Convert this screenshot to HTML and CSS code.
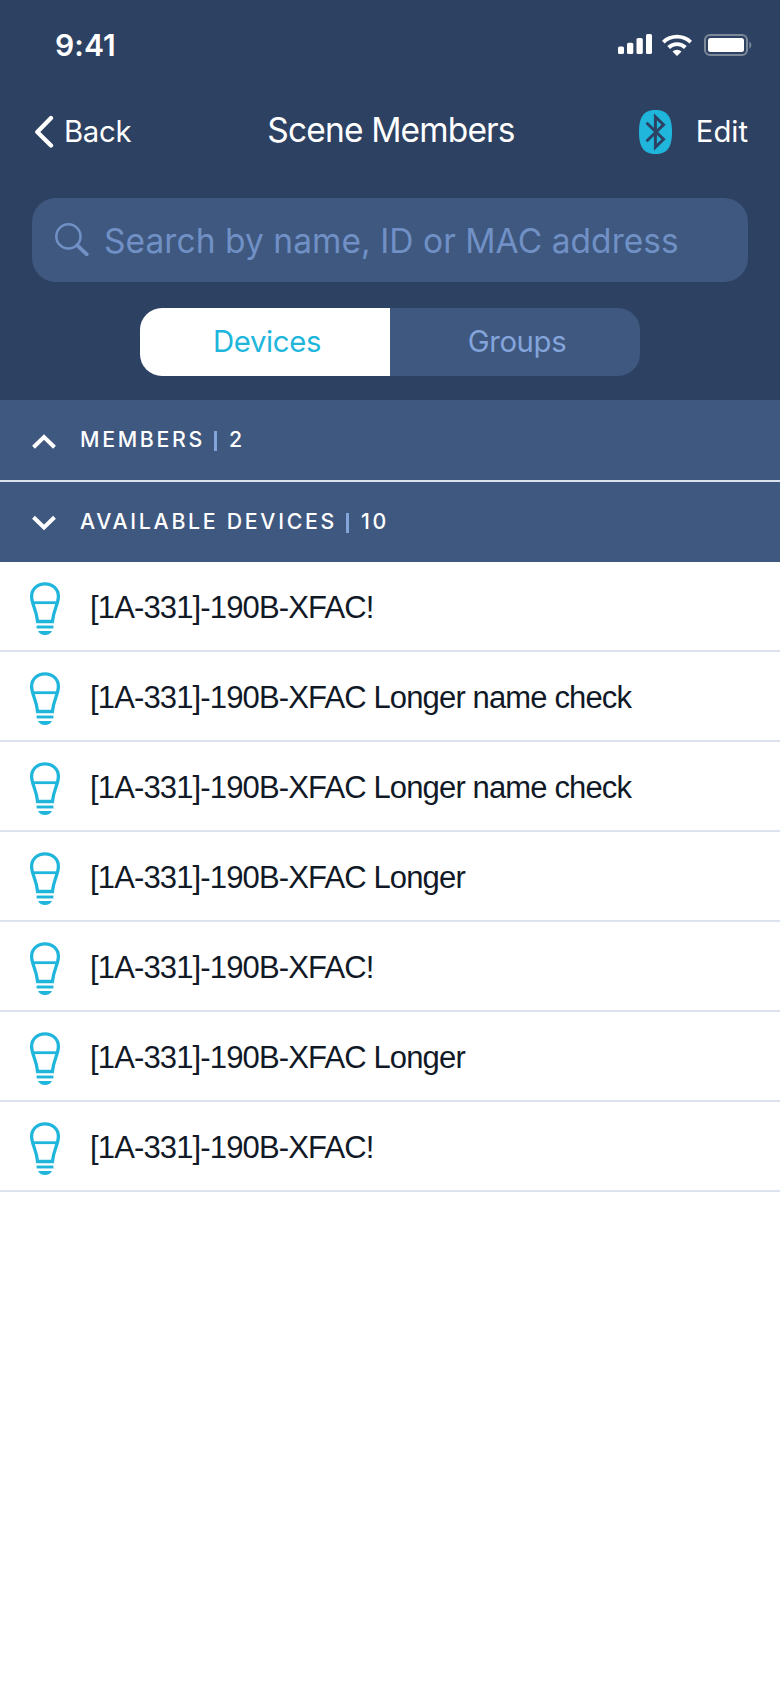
FILE: index.html
```html
<!DOCTYPE html>
<html lang="en">
<head>
<meta charset="utf-8">
<title>Scene Members</title>
<link rel="stylesheet" href="styles.css">
</head>
<body>
<svg width="0" height="0" class="defs" aria-hidden="true">
  <symbol id="bulb" viewBox="0 0 32 54">
    <path d="M8.600 39.500 C7.300 27 2.600 22.500 2.600 14.300 C2.600 7 8.400 1.900 16 1.900 S29.400 7 29.400 14.300 C29.400 22.500 24.700 27 23.400 39.500 Z" fill="none" stroke="#20b6dc" stroke-width="3.300"/>
    <path d="M3.500 20.700 H28.500" stroke="#20b6dc" stroke-width="2.800"/>
    <path d="M7.600 45 H24.400" stroke="#20b6dc" stroke-width="2.900"/>
    <path d="M9 49 H23 C21.600 51.600 19.200 53 16 53 S10.400 51.600 9 49 Z" fill="#20b6dc"/>
  </symbol>
</svg>
<div class="screen">
  <header class="header">
    <div class="status">
      <span class="time">9:41</span>
      <svg class="status-icons" width="136" height="24" viewBox="0 0 136 24">
        <g fill="#fff">
          <rect x="0" y="12.500" width="6" height="7.500" rx="1.600"/>
          <rect x="9" y="8.700" width="6.300" height="11.300" rx="1.600"/>
          <rect x="18.500" y="4" width="6.300" height="16" rx="1.600"/>
          <rect x="28" y="0" width="6" height="20" rx="1.600"/>
        </g>
        <path d="M44 6.700 a22 22 0 0 1 30 0 l-2.600 2.700 a17.900 17.900 0 0 0 -24.800 0 z" fill="#fff"/>
        <path d="M49.300 12.100 a14 14 0 0 1 19.400 0 l-2.700 2.800 a10 10 0 0 0 -14 0 z" fill="#fff"/>
        <path d="M54.500 17.500 a6.700 6.700 0 0 1 9 0 l-3.900 4 q-0.600 0.500 -1.200 0 z" fill="#fff"/>
        <rect x="87" y="1" width="42" height="20" rx="5" fill="none" stroke="#7d8899" stroke-width="2"/>
        <rect x="90" y="4" width="36" height="14" rx="2.500" fill="#fff"/>
        <path d="M131.300 7.500 a4.500 4.500 0 0 1 0 7.500 z" fill="#7d8899"/>
      </svg>
    </div>
    <nav class="nav">
      <a class="back">
        <svg width="20" height="34" viewBox="0 0 20 34"><path d="M17 3 L3.300 17 L17 30.500" fill="none" stroke="#fff" stroke-width="4.300" stroke-linecap="round" stroke-linejoin="round"/></svg>
        <span class="back-label">Back</span>
      </a>
      <h1 class="title">Scene Members</h1>
      <div class="actions">
        <svg width="33" height="44" viewBox="0 0 33 44">
          <path d="M16.500 0 C28 0 33 6.500 33 22 S28 44 16.500 44 S0 37.500 0 22 S5 0 16.500 0 Z" fill="#20b6dc"/>
          <path d="M7.500 12.700 L24.500 29.300 L16.400 37.200 V6.800 L24.500 14.700 L7.500 31.300" fill="none" stroke="#2d4162" stroke-width="3"/>
        </svg>
        <span class="edit">Edit</span>
      </div>
    </nav>
    <div class="search">
      <svg width="34" height="34" viewBox="0 0 34 34" fill="none" stroke="#7090c6"><circle cx="13.400" cy="13.400" r="12.100" stroke-width="2.500"/><path d="M22.300 22.300 L31.800 31.300" stroke-width="3.800" stroke-linecap="round"/></svg>
      <span class="placeholder">Search by name, ID or MAC address</span>
    </div>
    <div class="tabs">
      <div class="tab tab-active"><span>Devices</span></div>
      <div class="tab"><span>Groups</span></div>
    </div>
  </header>
  <section class="section section-divided">
    <svg class="chevron-up" width="24" height="16" viewBox="0 0 24 16"><path d="M1.500 13.200 L12 3 L22.500 13.200" fill="none" stroke="#fff" stroke-width="4"/></svg>
    <h2 class="section-title">MEMBERS</h2><i class="bar"></i><span class="section-title">2</span>
  </section>
  <section class="section">
    <svg class="chevron-down" width="24" height="16" viewBox="0 0 24 16"><path d="M1.500 2.300 L12 12.500 L22.500 2.300" fill="none" stroke="#fff" stroke-width="4"/></svg>
    <h2 class="section-title">AVAILABLE DEVICES</h2><i class="bar"></i><span class="section-title">10</span>
  </section>
  <ul class="list">
    <li class="row"><svg class="bulb"><use href="#bulb"/></svg><span>[1A-331]-190B-XFAC!</span></li>
    <li class="row"><svg class="bulb"><use href="#bulb"/></svg><span>[1A-331]-190B-XFAC Longer name check</span></li>
    <li class="row"><svg class="bulb"><use href="#bulb"/></svg><span>[1A-331]-190B-XFAC Longer name check</span></li>
    <li class="row"><svg class="bulb"><use href="#bulb"/></svg><span>[1A-331]-190B-XFAC Longer</span></li>
    <li class="row"><svg class="bulb"><use href="#bulb"/></svg><span>[1A-331]-190B-XFAC!</span></li>
    <li class="row"><svg class="bulb"><use href="#bulb"/></svg><span>[1A-331]-190B-XFAC Longer</span></li>
    <li class="row"><svg class="bulb"><use href="#bulb"/></svg><span>[1A-331]-190B-XFAC!</span></li>
  </ul>
</div>
</body>
</html>
```
FILE: styles.css
```css
* { box-sizing: border-box; }
body { margin: 0; background: #fff; font-family: Inter, sans-serif; }
svg { display: block; flex: none; }
.defs { display: none; }
h1, h2, ul { margin: 0; padding: 0; font-weight: 400; }
.screen { width: 780px; min-height: 1688px; background: #fff; white-space: nowrap; }
.header { height: 400px; background: #2d4162; color: #fff; }
.status { height: 90px; padding: 26px 26px 0 55px; display: flex; justify-content: space-between; align-items: flex-start; }
.time { font-size: 30px; line-height: 38px; font-weight: 600; letter-spacing: 0.1px; }
.status-icons { margin-top: 8px; }
.nav { height: 84px; padding: 0 32px 0 34px; display: grid; grid-template-columns: 1fr auto 1fr; align-items: center; }
.back { display: flex; align-items: center; gap: 10px; font-size: 29.3px; }
.back-label { letter-spacing: -0.3px; padding-bottom: 2px; }
.title { font-size: 33.5px; line-height: 40px; letter-spacing: -0.85px; padding-bottom: 4px; }
.actions { display: flex; align-items: center; justify-content: flex-end; gap: 24px; font-size: 29.3px; }
.edit { letter-spacing: 0; padding-bottom: 2px; }
.search { margin: 24px 32px 0; height: 84px; border-radius: 24px; background: #3f587f; padding: 0 23px; display: flex; align-items: center; gap: 15px; color: #7090c6; font-size: 33.5px; }
.placeholder { letter-spacing: 0.06px; padding-top: 1px; }
.tabs { width: 500px; height: 68px; margin: 26px auto 0; display: grid; grid-template-columns: 1fr 1fr; border-radius: 22px; overflow: hidden; background: #3f587f; color: #84a4dc; font-size: 29.3px; letter-spacing: -0.35px; }
.tab { display: flex; align-items: center; justify-content: center; padding: 0 0 2px 4px; }
.tab-active { background: #fff; color: #20b6dc; }
.section { height: 80px; padding: 0 32px; display: flex; align-items: center; background: #3f587f; color: #fff; }
.section-divided { height: 82px; border-bottom: 2px solid #dce3ee; }
.chevron-up { margin-top: 4px; }
.chevron-down { margin-top: 1px; }
.section-title { font-size: 21.3px; line-height: 28px; font-weight: 500; letter-spacing: 2.7px; padding-bottom: 2px; }
h2.section-title { margin-left: 24px; }
.bar { width: 3px; height: 20px; margin: 2px 12px 0 9px; background: #84a4dc; }
.list { list-style: none; }
.row { height: 90px; border-bottom: 2px solid #dce3ee; padding: 0 29px; display: flex; align-items: center; gap: 29px; font-family: "Liberation Sans", sans-serif; font-size: 31px; color: #111927; letter-spacing: -0.86px; }
.row span { padding-top: 3px; }
.bulb { width: 32px; height: 54px; margin-top: 6px; }
```
